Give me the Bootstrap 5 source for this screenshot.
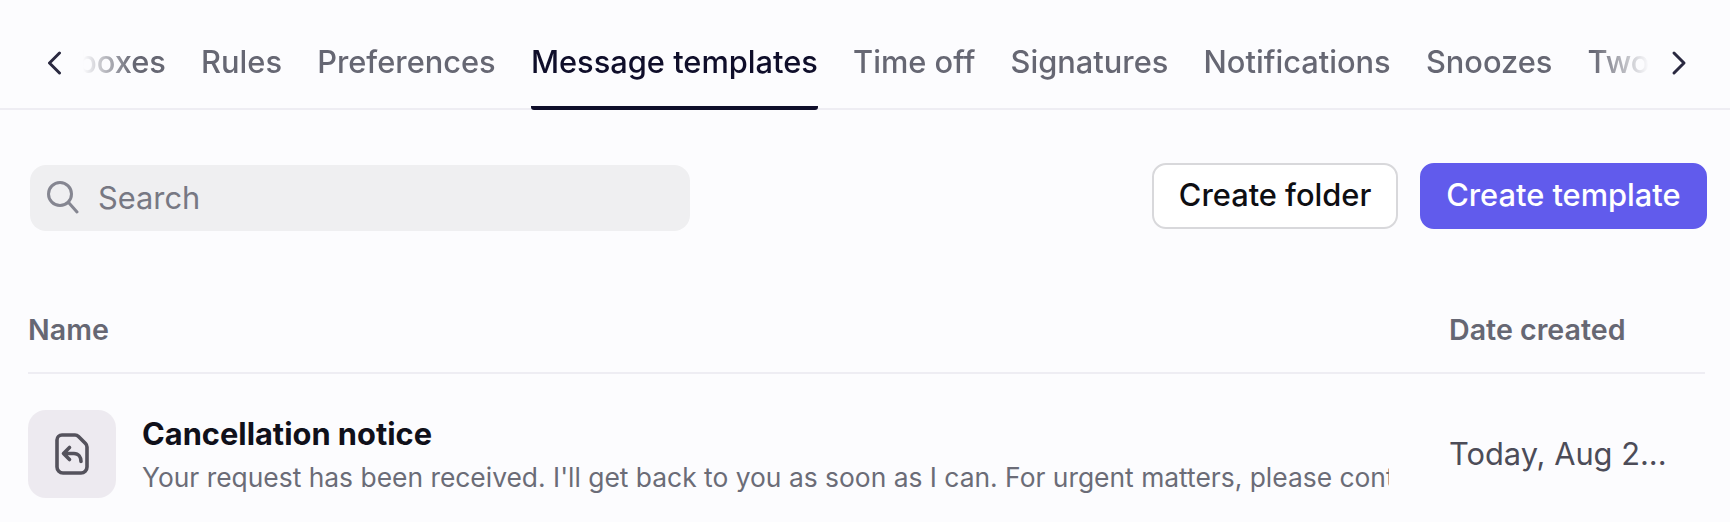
<!DOCTYPE html>
<html lang="en">
<head>
    <meta charset="UTF-8">
    <meta name="viewport" content="width=device-width, initial-scale=1.0">
    <title>Message templates</title>
    <link href="https://cdn.jsdelivr.net/npm/bootstrap@5.3.0/dist/css/bootstrap.min.css" rel="stylesheet">
    <style>
        body {
            background-color: #fcfcfe;
            font-family: Inter, "Liberation Sans", sans-serif;
            overflow: hidden;
        }
        .tab-strip {
            height: 110px;
            border-bottom: 2px solid #eeedf3;
        }
        .tab-arrow {
            width: 36px;
            height: 36px;
            flex: none;
            margin-top: 17px;
        }
        .tab-window {
            width: 1568px;
            height: 110px;
            margin-left: -1px;
            overflow: hidden;
            -webkit-mask-image: linear-gradient(to right, transparent 0, #000 50px, #000 1510px, transparent 1566px);
            mask-image: linear-gradient(to right, transparent 0, #000 50px, #000 1510px, transparent 1566px);
        }
        .tab-list {
            gap: 35.2px;
            margin-left: -32.2px;
            flex-wrap: nowrap;
        }
        .tab-item {
            display: block;
            height: 110px;
            padding: 41px 0 0;
            font-size: 30.8px;
            line-height: 42px;
            font-weight: 500;
            color: #666773;
            white-space: nowrap;
            text-decoration: none;
            border-bottom: 4px solid transparent;
            border-radius: 0 0 3px 3px;
        }
        .tab-item.active {
            color: #0f0e2a;
            border-bottom-color: #0f0e2a;
        }
        .tool-row {
            padding: 53px 23px 0 30px;
            height: 119px;
        }
        .search-box {
            width: 660px;
            height: 66px;
            margin-top: 2px;
            padding: 0 20px 0 17px;
            background-color: #efeff1;
            border-radius: 16px;
        }
        .search-box svg {
            margin-right: 19px;
        }
        .search-box input {
            border: 0;
            outline: 0;
            background: transparent;
            padding: 0;
            font-size: 30.8px;
            color: #1a1a25;
            width: 100%;
        }
        .search-box input::placeholder {
            color: #777883;
            opacity: 1;
        }
        .tool-actions {
            gap: 22px;
        }
        .tool-btn {
            height: 66px;
            padding: 0 24.4px 2px;
            font-size: 30.8px;
            font-weight: 500;
            border-radius: 14px;
        }
        .btn-folder {
            background-color: #fff;
            border: 2px solid #d8d8db;
            color: #0e0e12;
        }
        .btn-template {
            background-color: #615bec;
            border: 2px solid #615bec;
            color: #fff;
        }
        .list-area {
            padding: 0 25px 0 28px;
        }
        .list-head {
            height: 145px;
            padding-top: 81px;
            border-bottom: 2px solid #eeedf3;
            font-size: 28.6px;
            line-height: 40px;
            font-weight: 600;
            color: #666773;
        }
        .date-col {
            width: 256px;
            flex: none;
        }
        .tpl-row {
            padding-top: 36px;
        }
        .tpl-tile {
            width: 88px;
            height: 88px;
            flex: none;
            background-color: #edeaf0;
            border-radius: 18px;
        }
        .tpl-body {
            width: 1247px;
            margin-left: 26px;
            overflow: hidden;
        }
        .tpl-title {
            font-size: 30.8px;
            line-height: 44px;
            font-weight: 700;
            color: #10101a;
            margin-top: 2px;
        }
        .tpl-preview {
            font-size: 26.4px;
            line-height: 40px;
            color: #6b6c77;
            white-space: nowrap;
            overflow: hidden;
            margin-top: 1px;
        }
        .date-value {
            font-size: 30.8px;
            line-height: 88px;
            color: #4c4c58;
        }
    </style>
</head>
<body>
    <div class="tab-strip d-flex">
        <div class="d-flex align-items-center ps-5">
            <svg class="tab-arrow" viewBox="0 0 36 36" fill="none" stroke="#2a2940" stroke-width="3" stroke-linecap="round" stroke-linejoin="round"><path d="M11.5 8 L1.5 18 L11.5 28"/></svg>
        </div>
        <div class="tab-window">
            <ul class="tab-list nav">
                <li><a class="tab-item" href="#">Inboxes</a></li>
                <li><a class="tab-item" href="#">Rules</a></li>
                <li><a class="tab-item" href="#">Preferences</a></li>
                <li><a class="tab-item active" href="#">Message templates</a></li>
                <li><a class="tab-item" href="#">Time off</a></li>
                <li><a class="tab-item" href="#">Signatures</a></li>
                <li><a class="tab-item" href="#">Notifications</a></li>
                <li><a class="tab-item" href="#">Snoozes</a></li>
                <li><a class="tab-item" href="#">Two-factor</a></li>
            </ul>
        </div>
        <div class="d-flex align-items-center">
            <svg class="tab-arrow" viewBox="0 0 36 36" fill="none" stroke="#2a2940" stroke-width="3" stroke-linecap="round" stroke-linejoin="round"><path d="M23 8 L33 18 L23 28"/></svg>
        </div>
    </div>

    <div class="tool-row d-flex justify-content-between align-items-start">
        <div class="search-box d-flex align-items-center">
            <svg width="32" height="34" viewBox="0 0 32 34" fill="none" stroke="#858691" stroke-width="3" stroke-linecap="round" class="flex-shrink-0"><circle cx="13" cy="13" r="11.5"/><path d="M22 22 L30 31"/></svg>
            <input type="text" placeholder="Search">
        </div>
        <div class="tool-actions d-flex">
            <button class="btn tool-btn btn-folder" type="button">Create folder</button>
            <button class="btn tool-btn btn-template" type="button">Create template</button>
        </div>
    </div>

    <div class="list-area">
        <div class="list-head d-flex justify-content-between">
            <div>Name</div>
            <div class="date-col">Date created</div>
        </div>
        <div class="tpl-row d-flex justify-content-between">
            <div class="d-flex">
                <div class="tpl-tile d-flex align-items-center justify-content-center">
                    <svg width="34" height="42" viewBox="0 0 34 42" fill="none" stroke="#54525c" stroke-width="3.6" stroke-linecap="round" stroke-linejoin="round"><path d="M7 2 H20 Q22 2 23.5 3.5 L30.5 10.5 Q32 12 32 14 V34 A6 6 0 0 1 26 40 H8 A6 6 0 0 1 2 34 V7 A5 5 0 0 1 7 2 Z"/><path d="M14.5 14.5 L8.5 20.5 L14.5 26.5 M8.5 20.5 H19 C23.5 20.5 26 24 26 28.5"/></svg>
                </div>
                <div class="tpl-body">
                    <div class="tpl-title">Cancellation notice</div>
                    <div class="tpl-preview">Your request has been received. I'll get back to you as soon as I can. For urgent matters, please contact our support team directly.</div>
                </div>
            </div>
            <div class="date-col date-value">Today, Aug 2...</div>
        </div>
    </div>

    <script src="https://cdn.jsdelivr.net/npm/bootstrap@5.3.0/dist/js/bootstrap.bundle.min.js"></script>
</body>
</html>
